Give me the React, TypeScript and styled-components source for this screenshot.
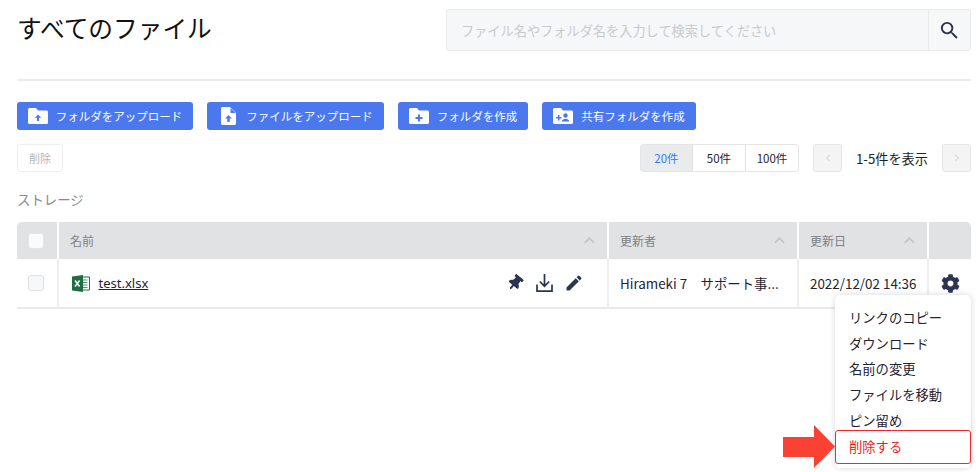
import React, { ReactElement } from 'react';
import styled, { createGlobalStyle } from 'styled-components';
import { FaCog, FaThumbtack, FaChevronLeft, FaChevronRight } from 'react-icons/fa';
import { MdEdit, MdSearch, MdKeyboardArrowUp } from 'react-icons/md';

const GlobalStyle = createGlobalStyle`
  html, body {
    margin: 0;
    padding: 0;
    background: #fff;
    overflow: hidden;
  }
  * {
    box-sizing: border-box;
  }
`;

const Page = styled.div`
  position: relative;
  width: 980px;
  height: 472px;
  overflow: hidden;
  padding: 9px 9px 0 17px;
  font-family: "Noto Sans CJK JP", "Noto Sans", sans-serif;
  color: #1f2430;
`;

const TopBar = styled.div`
  display: flex;
  justify-content: space-between;
  align-items: flex-start;
  height: 72px;
  border-bottom: 2px solid #ececec;
`;

const Title = styled.h1`
  margin: 0;
  font-size: 24.7px;
  line-height: 37px;
  font-weight: 400;
  color: #111;
`;

const SearchBox = styled.div`
  display: flex;
  width: 525px;
  height: 42px;
  background: #f6f7f9;
  border: 1px solid #e9eaec;
  border-radius: 3px;
`;

const SearchText = styled.div`
  flex: 1;
  padding-left: 14px;
  font-size: 13.2px;
  line-height: 41px;
  color: #c9cacc;
`;

const SearchButton = styled.div`
  width: 42px;
  display: flex;
  align-items: center;
  justify-content: center;
  border-left: 1px solid #e9eaec;
  color: #2b3244;
  font-size: 23px;
`;

const ActionRow = styled.div`
  display: flex;
  gap: 14px;
  margin-top: 21px;
`;

const ActionButton = styled.div<{ $width: number }>`
  display: flex;
  align-items: center;
  justify-content: center;
  gap: 8px;
  width: ${(p) => p.$width}px;
  height: 28px;
  background: #4c78ee;
  border-radius: 3px;
  color: #fff;
  font-size: 11.5px;
  white-space: nowrap;
`;

const IconBox = styled.span`
  display: flex;
  justify-content: center;
  width: 20px;
`;

const ControlRow = styled.div`
  display: flex;
  align-items: center;
  justify-content: space-between;
  margin-top: 14px;
  height: 28px;
`;

const DeleteButton = styled.div`
  width: 46px;
  height: 28px;
  border: 1px solid #eeeeee;
  border-radius: 3px;
  font-size: 11px;
  line-height: 26px;
  text-align: center;
  color: #b5b5b5;
`;

const Paging = styled.div`
  display: flex;
  align-items: center;
`;

const Segments = styled.div`
  display: flex;
  height: 28px;
  margin-right: 14px;
  border: 1px solid #e5e5e5;
  border-radius: 3px;
  overflow: hidden;
`;

const Segment = styled.div<{ $active?: boolean; $width: number }>`
  width: ${(p) => p.$width}px;
  border-left: ${(p) => (p.$active ? 'none' : '1px solid #e0e0e0')};
  background: ${(p) => (p.$active ? '#e9ebed' : '#fff')};
  color: ${(p) => (p.$active ? '#2f7bf0' : '#1f2430')};
  font-size: 11.5px;
  line-height: 26px;
  text-align: center;
`;

const PageArrow = styled.div`
  width: 29px;
  height: 28px;
  display: flex;
  align-items: center;
  justify-content: center;
  background: #f4f4f4;
  border: 1px solid #e6e6e6;
  border-radius: 3px;
  color: #dcdcdc;
  font-size: 8px;
`;

const PageLabel = styled.div`
  width: 100px;
  padding-top: 1px;
  text-align: center;
  font-size: 13.2px;
  color: #222;
`;

const SectionLabel = styled.div`
  margin-top: 17px;
  font-size: 13.4px;
  line-height: 20px;
  color: #8a8a8a;
`;

const Table = styled.div`
  margin-top: 13px;
  display: grid;
  grid-template-columns: 40px 550px 190px 130px 44px;
  border-bottom: 2px solid #e9e9e9;
`;

const HeadCell = styled.div<{ $first?: boolean; $last?: boolean }>`
  height: 37px;
  display: flex;
  align-items: center;
  justify-content: space-between;
  padding: 0 7px 0 11px;
  background: #e1e2e4;
  border-left: ${(p) => (p.$first ? 'none' : '2px solid #fff')};
  border-top-left-radius: ${(p) => (p.$first ? '5px' : '0')};
  border-top-right-radius: ${(p) => (p.$last ? '5px' : '0')};
  font-size: 12px;
  color: #7f8184;
`;

const Sort = styled.span`
  display: flex;
  font-size: 21px;
  color: #c3c5c8;
`;

const BodyCell = styled.div<{ $first?: boolean }>`
  height: 48px;
  display: flex;
  align-items: center;
  padding: 0 11px;
  border-left: ${(p) => (p.$first ? 'none' : '2px solid #eeeeee')};
  font-size: 13.4px;
  color: #1f2430;
  white-space: nowrap;
`;

const NameCell = styled(BodyCell)`
  padding-left: 12.5px;
`;

const CheckBox = styled.div<{ $head?: boolean }>`
  width: 16px;
  height: 16px;
  border-radius: 3px;
  border: 1px solid ${(p) => (p.$head ? '#e4e5e7' : '#dfe0e2')};
  background: ${(p) => (p.$head ? '#fbfbfc' : '#f7f8f9')};
`;

const FileName = styled.a`
  margin-left: 9px;
  font-size: 13px;
  font-family: "Noto Sans", sans-serif;
  color: #1f2430;
  text-decoration: underline;
`;

const RowIcons = styled.div`
  display: flex;
  align-items: center;
  gap: 13px;
  margin-left: auto;
  margin-right: 12px;
  color: #2b3450;
`;

const IconSlot = styled.span<{ $size: number }>`
  display: flex;
  font-size: ${(p) => p.$size}px;
`;

const GearCell = styled(BodyCell)`
  justify-content: center;
  padding: 0;
  font-size: 19px;
  color: #2b3450;
`;

const Menu = styled.div`
  position: absolute;
  left: 835px;
  top: 295px;
  width: 136px;
  height: 173px;
  padding-top: 10px;
  background: #fff;
  border-radius: 5px;
  box-shadow: 0 0 6px rgba(0, 0, 0, 0.16);
`;

const MenuItem = styled.div`
  height: 25.7px;
  padding-left: 14px;
  font-size: 13.3px;
  line-height: 25.7px;
  color: #1f2430;
`;

const DangerItem = styled.div`
  height: 34px;
  margin-top: -3.5px;
  padding-left: 13px;
  font-size: 13.3px;
  line-height: 32px;
  color: #ee1c25;
  border: 1px solid #f0272d;
  border-radius: 3px;
`;

const Arrow = styled.svg`
  position: absolute;
  left: 783px;
  top: 425px;
`;

function FolderIcon({ mark }: { mark: 'up' | 'plus' | 'share' }): ReactElement {
  return (
    <svg width="20" height="16" viewBox="0 0 20 16">
      <path d="M0 1.500C0 .7.7 0 1.500 0H8l2 2.400h8.500c.8 0 1.500.7 1.500 1.500v10.600c0 .8-.7 1.500-1.500 1.500h-17C.7 16 0 15.300 0 14.500z" fill="#fff" />
      {mark === 'up' && <path d="M10 6.500l3.200 3.200h-2.200v3.300H9V9.700H6.800z" fill="#4c78ee" />}
      {mark === 'plus' && <path d="M9 6.500h2V9h2.500v2H11v2.500H9V11H6.500V9H9z" fill="#4c78ee" />}
      {mark === 'share' && (
        <g fill="#4c78ee">
          <path d="M3 9h2V7h1.500v2h2v1.500h-2v2H5v-2H3z" />
          <circle cx="12.500" cy="7.500" r="2.200" />
          <path d="M8.800 13.500c0-1.800 2-2.800 3.700-2.800s3.700 1 3.700 2.800z" />
        </g>
      )}
    </svg>
  );
}

function FileUpIcon(): ReactElement {
  return (
    <svg width="15" height="18" viewBox="0 0 15 18">
      <path d="M1.500 0H9l6 6v10.500c0 .8-.7 1.500-1.500 1.500h-12C.7 18 0 17.300 0 16.500v-15C0 .7.7 0 1.500 0z" fill="#fff" />
      <path d="M9.500 1v5h5z" fill="#4c78ee" />
      <path d="M7.500 8l3.400 3.400H8.700V15H6.300v-3.600H4.100z" fill="#4c78ee" />
    </svg>
  );
}

function ExcelIcon(): ReactElement {
  return (
    <svg width="18" height="17" viewBox="0 0 18 17">
      <path d="M8 2h9.500v13H8z" fill="#fff" stroke="#1f7244" strokeWidth="1" />
      <path d="M10 5h5.500M10 7.500h5.500M10 10h5.500M10 12.500h5.500" stroke="#4f9a6f" strokeWidth="1.200" />
      <path d="M0 1.500L11 0v17L0 15.500z" fill="#1d6f42" />
      <path d="M3 5.500l4.500 6M7.500 5.500l-4.500 6" stroke="#fff" strokeWidth="1.500" />
    </svg>
  );
}

function TrayDownloadIcon(): ReactElement {
  return (
    <svg width="17" height="18" viewBox="0 0 17 18" fill="none" stroke="currentColor" strokeWidth="1.700">
      <path d="M8.500 0v12M3.800 7.500l4.700 4.700 4.700-4.700" />
      <path d="M1 10.500v6.600h15v-6.600" />
    </svg>
  );
}

function App(): ReactElement {
  return (
    <Page>
      <GlobalStyle />
      <TopBar>
        <Title>すべてのファイル</Title>
        <SearchBox>
          <SearchText>ファイル名やフォルダ名を入力して検索してください</SearchText>
          <SearchButton>
            <MdSearch />
          </SearchButton>
        </SearchBox>
      </TopBar>

      <ActionRow>
        <ActionButton $width={176}>
          <FolderIcon mark="up" />
          フォルダをアップロード
        </ActionButton>
        <ActionButton $width={177}>
          <IconBox>
            <FileUpIcon />
          </IconBox>
          ファイルをアップロード
        </ActionButton>
        <ActionButton $width={130}>
          <FolderIcon mark="plus" />
          フォルダを作成
        </ActionButton>
        <ActionButton $width={154}>
          <FolderIcon mark="share" />
          共有フォルダを作成
        </ActionButton>
      </ActionRow>

      <ControlRow>
        <DeleteButton>削除</DeleteButton>
        <Paging>
          <Segments>
            <Segment $active $width={51}>20件</Segment>
            <Segment $width={53}>50件</Segment>
            <Segment $width={53}>100件</Segment>
          </Segments>
          <PageArrow>
            <FaChevronLeft />
          </PageArrow>
          <PageLabel>1-5件を表示</PageLabel>
          <PageArrow>
            <FaChevronRight />
          </PageArrow>
        </Paging>
      </ControlRow>

      <SectionLabel>ストレージ</SectionLabel>

      <Table>
        <HeadCell $first>
          <CheckBox $head />
        </HeadCell>
        <HeadCell>
          名前
          <Sort><MdKeyboardArrowUp /></Sort>
        </HeadCell>
        <HeadCell>
          更新者
          <Sort><MdKeyboardArrowUp /></Sort>
        </HeadCell>
        <HeadCell>
          更新日
          <Sort><MdKeyboardArrowUp /></Sort>
        </HeadCell>
        <HeadCell $last />

        <BodyCell $first>
          <CheckBox />
        </BodyCell>
        <NameCell>
          <ExcelIcon />
          <FileName>test.xlsx</FileName>
          <RowIcons>
            <IconSlot $size={16}><FaThumbtack style={{ transform: 'rotate(40deg)' }} /></IconSlot>
            <IconSlot $size={17}><TrayDownloadIcon /></IconSlot>
            <IconSlot $size={20}><MdEdit style={{ marginLeft: '-2px' }} /></IconSlot>
          </RowIcons>
        </NameCell>
        <BodyCell>Hirameki 7　サポート事...</BodyCell>
        <BodyCell>2022/12/02 14:36</BodyCell>
        <GearCell>
          <FaCog />
        </GearCell>
      </Table>

      <Menu>
        <MenuItem>リンクのコピー</MenuItem>
        <MenuItem>ダウンロード</MenuItem>
        <MenuItem>名前の変更</MenuItem>
        <MenuItem>ファイルを移動</MenuItem>
        <MenuItem>ピン留め</MenuItem>
        <DangerItem>削除する</DangerItem>
      </Menu>

      <Arrow width="52" height="43" viewBox="0 0 52 43">
        <path d="M0 12h31V0l21 21.500L31 43V32H0z" fill="#fa4133" />
      </Arrow>
    </Page>
  );
}

export default App;
